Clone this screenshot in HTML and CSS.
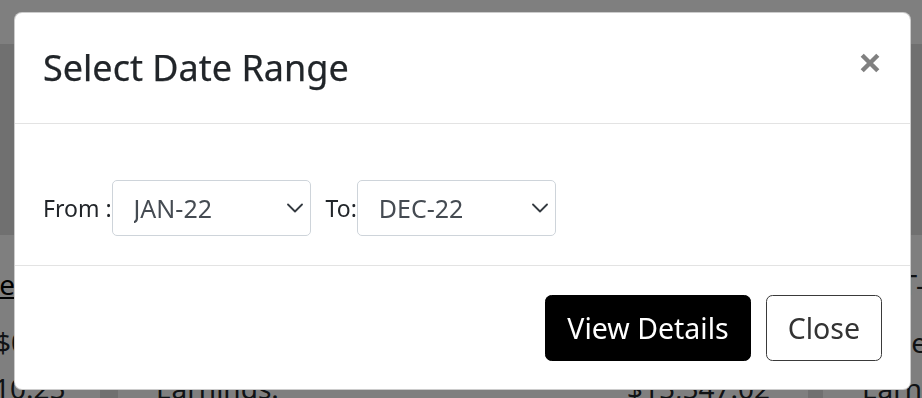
FILE: index.html
```html
<!DOCTYPE html>
<html lang="en">
<head>
<meta charset="utf-8">
<title>Select Date Range</title>
<link rel="stylesheet" href="styles.css">
</head>
<body>
  <div class="page">
    <header class="topbar"></header>
    <section class="band"></section>
    <div class="cards">
      <div class="card card-left">
        <div class="card-inner">
          <a class="card-link" href="#">Net</a>
          <div class="card-text">
            <div class="indent">$0.00</div>
            <div>$10.25</div>
          </div>
        </div>
      </div>
      <div class="card card-mid">
        <a class="card-link" href="#">Gross Earnings Summary</a>
        <div class="card-text">
          <div>Total for the selected period</div>
          <div class="card-row"><span>Earnings:</span><span>$15,547.02</span></div>
        </div>
      </div>
      <div class="card card-right">
        <a class="card-link plain" href="#">All T-Bills</a>
        <div class="card-text">
          <div>Other</div>
          <div>Earnings:</div>
        </div>
      </div>
    </div>
  </div>

  <div class="backdrop"></div>

  <div class="modal-wrap">
    <div class="modal" role="dialog" aria-labelledby="modal-title">
      <div class="modal-header">
        <h5 class="modal-title" id="modal-title">Select Date Range</h5>
        <button class="btn-close" type="button" aria-label="Close">
          <svg width="20" height="20" viewBox="0 0 20 20" aria-hidden="true">
            <path d="M2.2 2.2 L17.8 17.8 M17.8 2.2 L2.2 17.8" stroke="#808080" stroke-width="4.4" fill="none"/>
          </svg>
        </button>
      </div>
      <div class="modal-body">
        <div class="range">
          <label class="range-label" for="from">From :</label>
          <span class="select-wrap">
            <select id="from" class="form-select">
              <option>JAN-22</option>
            </select>
            <svg class="chevron" width="16" height="10" viewBox="0 0 16 10" aria-hidden="true">
              <path d="M1 1.5 L8 8.5 L15 1.5" stroke="#343a40" stroke-width="1.8" fill="none" stroke-linecap="round" stroke-linejoin="round"/>
            </svg>
          </span>
          <label class="range-label" for="to">To:</label>
          <span class="select-wrap">
            <select id="to" class="form-select">
              <option>DEC-22</option>
            </select>
            <svg class="chevron" width="16" height="10" viewBox="0 0 16 10" aria-hidden="true">
              <path d="M1 1.5 L8 8.5 L15 1.5" stroke="#343a40" stroke-width="1.8" fill="none" stroke-linecap="round" stroke-linejoin="round"/>
            </svg>
          </span>
        </div>
      </div>
      <div class="modal-footer">
        <button class="btn btn-dark" type="button">View Details</button>
        <button class="btn btn-outline" type="button">Close</button>
      </div>
    </div>
  </div>
</body>
</html>
```

FILE: styles.css
```css
* {
  box-sizing: border-box;
}

html,
body {
  margin: 0;
  padding: 0;
}

body {
  width: 922px;
  height: 398px;
  overflow: hidden;
  background: #e0e0e0;
  color: #212529;
  font-family: "Noto Sans", "Open Sans", sans-serif;
}

/* ---------- background page ---------- */
.page {
  display: flex;
  flex-direction: column;
  height: 398px;
}

.topbar {
  flex: none;
  height: 44px;
  background: #ffffff;
}

.band {
  flex: none;
  height: 191px;
}

.cards {
  flex: 1;
  display: flex;
  min-height: 0;
}

.card {
  background: #ffffff;
  padding: 28px 38px 0;
  font-size: 28px;
  overflow: hidden;
  white-space: nowrap;
}

.card-left {
  flex: none;
  width: 100px;
  padding-left: 0;
}

.card-inner {
  margin-left: -22px;
}

.indent {
  padding-left: 17px;
}

.card-mid {
  flex: none;
  width: 690px;
  margin-left: 18px;
}

.card-right {
  flex: 1;
  margin-left: 15px;
  padding-left: 39px;
}

.card-link {
  display: block;
  line-height: 42px;
  margin-bottom: 14px;
  color: #000000;
  text-decoration: underline;
}

.card-link.plain {
  text-decoration: none;
  color: #212529;
}

.card-text {
  line-height: 46px;
}

.card-row {
  display: flex;
  justify-content: space-between;
}

/* ---------- overlay + modal ---------- */
.backdrop {
  position: fixed;
  inset: 0;
  background: rgba(0, 0, 0, 0.5);
}

.modal-wrap {
  position: fixed;
  inset: 0;
  padding: 12px 0 0 14px;
}

.modal {
  width: 897px;
  background: #ffffff;
  border: 1px solid rgba(0, 0, 0, 0.2);
  border-radius: 8px;
  overflow: hidden;
}

.modal-header {
  display: flex;
  align-items: flex-start;
  padding: 28px 28px 29px;
  border-bottom: 1px solid #e3e3e3;
}

.modal-title {
  margin: 0;
  font-size: 36px;
  font-weight: 400;
  line-height: 53px;
  color: #212529;
  -webkit-text-stroke: 0.25px #212529;
}

.btn-close {
  display: flex;
  margin: 12px 2px 0 auto;
  padding: 0;
  border: 0;
  background: none;
}

.modal-body {
  padding: 56px 28px 29px;
  border-bottom: 1px solid #e3e3e3;
}

.range {
  display: flex;
  align-items: center;
}

.range-label {
  font-size: 23px;
  line-height: 34px;
  color: #212529;
  white-space: nowrap;
}

.select-wrap {
  position: relative;
  display: block;
  width: 199px;
  margin-right: 15px;
}

.form-select {
  display: block;
  width: 100%;
  height: 56px;
  margin: 0;
  padding: 0 40px 0 21px;
  appearance: none;
  -webkit-appearance: none;
  background: #ffffff;
  border: 1px solid #ced4da;
  border-radius: 5px;
  font-family: "Noto Sans", "Open Sans", sans-serif;
  font-size: 25px;
  color: #454b52;
}

.chevron {
  position: absolute;
  right: 8px;
  top: 23px;
  pointer-events: none;
}

.modal-footer {
  display: flex;
  justify-content: flex-end;
  align-items: center;
  gap: 15px;
  padding: 29px 28px 28px;
}

.btn {
  margin: 0;
  padding: 11px 21px;
  border: 1px solid transparent;
  border-radius: 6.5px;
  font-family: "Noto Sans", "Open Sans", sans-serif;
  font-size: 28.5px;
  line-height: 42px;
  cursor: pointer;
}

.btn-dark {
  background: #000000;
  border-color: #000000;
  color: #ffffff;
}

.btn-outline {
  background: #ffffff;
  border-color: #3a3a3a;
  color: #333333;
}
```
